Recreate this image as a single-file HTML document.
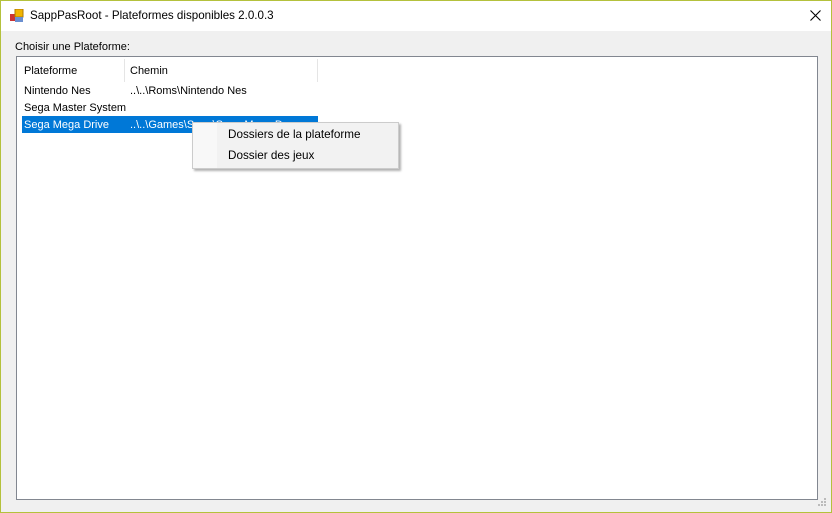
<!DOCTYPE html>
<html><head><style>
body{margin:0;width:832px;height:513px;overflow:hidden;font-family:"Liberation Sans",sans-serif;font-size:11px;color:#000}
.win{position:absolute;left:0;top:0;width:830px;height:511px;border:1px solid #b4c13c;background:#f0f0f0}
.title{position:absolute;left:0;top:0;width:830px;height:30px;background:#fff}
.t{position:absolute;white-space:nowrap}
.list{position:absolute;left:15px;top:55px;width:800px;height:442px;border:1px solid #828790;background:#fff}
.sep{position:absolute;top:2px;width:1px;height:23px;background:#e5e5e5}
.menu{position:absolute;left:191px;top:121px;width:205px;height:45px;background:#f2f2f2;border:1px solid #ccc;box-shadow:2px 2px 2px rgba(0,0,0,.3)}
</style></head><body>
<div class="win">
<div class="title">
<svg style="position:absolute;left:9px;top:8px" width="14" height="14"><rect x="0" y="5" width="6" height="7" fill="#c33"/><rect x="5" y="0" width="8" height="8" fill="#f0b400" stroke="#b07a00"/><rect x="5" y="8" width="8" height="5" fill="#6a8fd0"/></svg>
<div class="t" style="left:29px;top:8px;font-size:11.6px">SappPasRoot - Plateformes disponibles 2.0.0.3</div>
<svg style="position:absolute;left:809px;top:9px" width="11" height="11"><path d="M0.5 0.5L10.5 10.5M10.5 0.5L0.5 10.5" stroke="#000" stroke-width="1.1"/></svg>
</div>
<div class="t" style="left:14px;top:40px">Choisir une Plateforme:</div>
<div class="list">
<div class="sep" style="left:107px"></div><div class="sep" style="left:300px"></div>
<div class="t" style="left:7px;top:8px">Plateforme</div>
<div class="t" style="left:113px;top:8px">Chemin</div>
<div class="t" style="left:7px;top:28px">Nintendo Nes</div>
<div class="t" style="left:113px;top:28px">..\..\Roms\Nintendo Nes</div>
<div class="t" style="left:7px;top:45px">Sega Master System</div>
<div style="position:absolute;left:5px;top:59px;width:296px;height:17px;background:#0078d7"></div>
<div class="t" style="left:7px;top:62px;color:#fff">Sega Mega Drive</div>
<div class="t" style="left:113px;top:62px;color:#fff">..\..\Games\Sega\Sega Mega Dr</div>
</div>
<div class="menu">
<div style="position:absolute;left:0;top:0;width:24px;height:45px;background:#f8f8f8"></div>
<div class="t" style="left:35px;top:5px;font-size:11.7px">Dossiers de la plateforme</div>
<div class="t" style="left:35px;top:26px;font-size:11.7px">Dossier des jeux</div>
</div>
<svg style="position:absolute;left:817px;top:497px" width="10" height="10" fill="#bbb"><rect x="6" y="0" width="2" height="2"/><rect x="3" y="3" width="2" height="2"/><rect x="6" y="3" width="2" height="2"/><rect x="0" y="6" width="2" height="2"/><rect x="3" y="6" width="2" height="2"/><rect x="6" y="6" width="2" height="2"/></svg>
</div>
</body></html>
